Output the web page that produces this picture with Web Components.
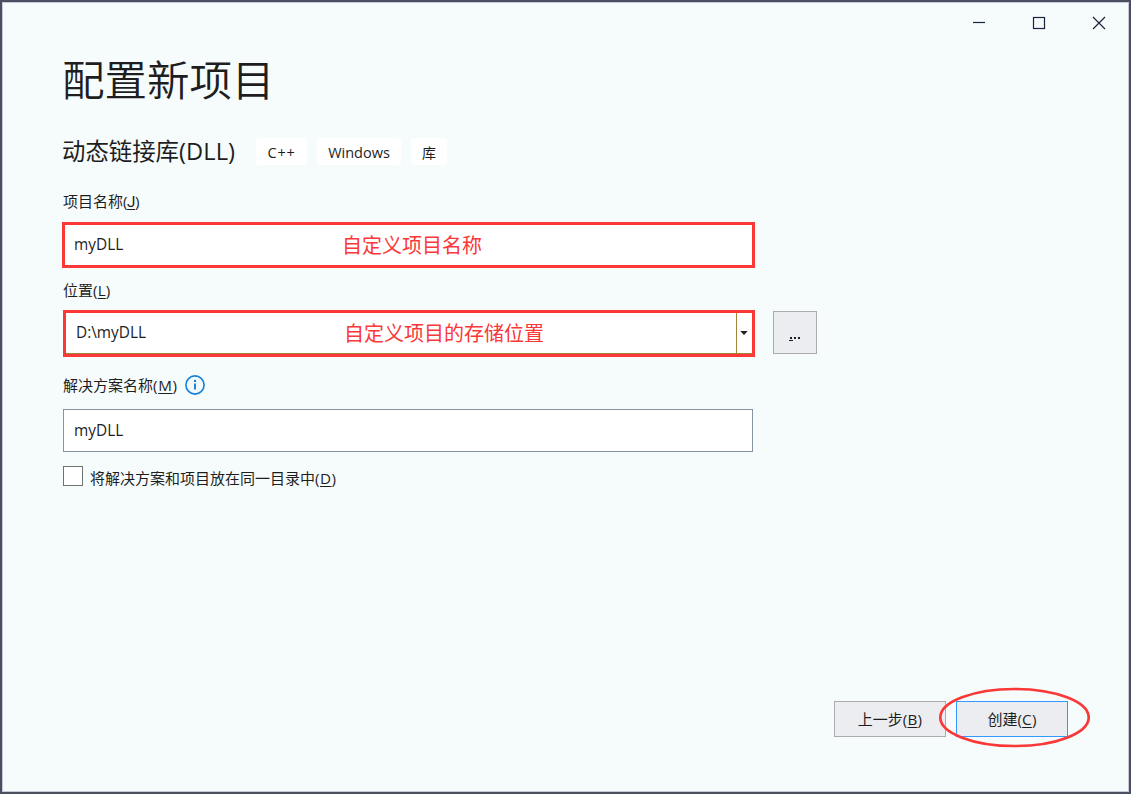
<!DOCTYPE html>
<html lang="zh-CN">
<head>
<meta charset="utf-8">
<title>配置新项目</title>
<style>
html,body{margin:0;height:100%;overflow:hidden}
body{font:15px/20px "Open Sans","Noto Sans CJK SC",sans-serif;color:#1e1e1e;background:#f6fcfc}
</style>
</head>
<body>
<project-window>
  <window-controls slot="controls"></window-controls>
  <h-title slot="content">配置新项目</h-title>
  <template-info slot="content" name="动态链接库" kind="(DLL)">
    <tag-chip style="--w:51px;--ls:.7px">C++</tag-chip>
    <tag-chip style="--w:84px">Windows</tag-chip>
    <tag-chip style="--w:36px;--fs:14px">库</tag-chip>
  </template-info>
  <field-label slot="content" key="J" style="--mt:26px;--kf:Roboto;--ks:-.4px">项目名称</field-label>
  <text-field slot="content" value="myDLL" style="--mt:12px">
    <red-note style="--x:-1px;--y:-1px;--w:693px;--h:46px;--tx:277px;--ty:10px">自定义项目名称</red-note>
  </text-field>
  <field-label slot="content" key="L" style="--mt:14px">位置</field-label>
  <location-row slot="content">
    <text-field value="D:\myDLL" combo style="--pad:12px">
      <red-note style="--x:0px;--y:-1px;--w:692px;--h:47px;--tx:278px;--ty:10px">自定义项目的存储位置</red-note>
    </text-field>
    <browse-button></browse-button>
  </location-row>
  <field-label slot="content" key="M" info style="--mt:21px;--ks:.7px">解决方案名称</field-label>
  <text-field slot="content" value="myDLL" style="--mt:14px"></text-field>
  <check-row slot="content" key="D" style="--ks:.5px">将解决方案和项目放在同一目录中</check-row>
  <push-button slot="actions" key="B">上一步</push-button>
  <push-button slot="actions" key="C" primary>创建</push-button>
</project-window>
<script>
function define(name, render) {
  customElements.define(name, class extends HTMLElement {
    connectedCallback() {
      if (this.shadowRoot) return;
      const t = document.createElement('template');
      t.innerHTML = render(this);
      this.attachShadow({ mode: 'open' }).append(t.content.cloneNode(true));
    }
  });
}
const keyCss = `.k{font-size:15.2px;letter-spacing:var(--ks,.2px);white-space:nowrap}.k u{font-family:var(--kf,inherit);text-decoration:underline;text-decoration-thickness:1px;text-underline-offset:2px;text-decoration-skip-ink:none}`;
const key = el => `<span class="k">(<u>${el.getAttribute('key')}</u>)</span>`;

define('project-window', () => `<style>
:host{display:flex;flex-direction:column;box-sizing:border-box;width:1131px;height:794px;border:2px solid #4c4f5f;background:#f6fcfc;box-shadow:inset 0 0 0 1px #c5c9da}
header{display:flex;justify-content:flex-end;height:42px}
main{flex:1;display:flex;flex-direction:column;align-items:flex-start;padding-left:61px}
footer{display:flex;justify-content:flex-end;gap:10px;padding:0 61px 55px 0}
</style><header><slot name="controls"></slot></header><main><slot name="content"></slot></main><footer><slot name="actions"></slot></footer>`);

define('window-controls', () => `<style>
:host{display:flex;height:42px}
span{display:grid;place-items:center;width:60px}
svg{display:block}
</style>
<span><svg width="14" height="14"><path d="M1 6.5h12" stroke="#17233b" stroke-width="1.2"/></svg></span>
<span><svg width="14" height="14"><rect x="1.5" y="1.5" width="11" height="11" fill="none" stroke="#17233b" stroke-width="1.2"/></svg></span>
<span><svg width="14" height="14"><path d="M1 1l12 12M13 1L1 13" stroke="#17233b" stroke-width="1.15"/></svg></span>`);

define('h-title', () => `<style>:host{display:block;font:350 42.5px/60px "Noto Sans CJK SC",sans-serif;margin-top:4px;margin-left:-1px;white-space:nowrap}</style><slot></slot>`);

define('template-info', el => `<style>
:host{display:flex;align-items:center;height:28px;margin-top:29px}
.n{width:194px;margin-left:-1px;font-size:23.4px;line-height:28px;white-space:nowrap}
.n span{font-size:23.6px;letter-spacing:.1px}
.t{display:flex;gap:10px}
</style><div class="n">${el.getAttribute('name')}<span>${el.getAttribute('kind')}</span></div><div class="t"><slot></slot></div>`);

define('tag-chip', () => `<style>:host{display:grid;place-items:center;box-sizing:border-box;width:var(--w);height:27px;padding-top:2px;border-radius:4px;background:#fff;font-size:var(--fs,14.5px);line-height:25px;letter-spacing:var(--ls,0)}</style><slot></slot>`);

define('field-label', el => `<style>
:host{display:flex;align-items:center;height:20px;margin-top:var(--mt);line-height:20px;white-space:nowrap}
:host([key="L"]){margin-bottom:-1px}
svg{margin-left:7px;flex:none}${keyCss}
</style><div><slot></slot>${key(el)}</div>${el.hasAttribute('info') ? `<svg width="20" height="20"><circle cx="10" cy="10" r="9.1" fill="#f3fafd" stroke="#1580d8" stroke-width="1.6"/><path d="M10 8.5v6" stroke="#1580d8" stroke-width="1.9"/><circle cx="10" cy="5.9" r="1.2" fill="#1580d8"/></svg>` : ''}`);

define('text-field', el => `<style>
:host{display:flex;position:relative;box-sizing:border-box;width:690px;height:43px;margin-top:var(--mt,0);border:1px solid #8593a3;background:#fff}
.v{flex:1;padding-left:var(--pad,10px);line-height:42px;font-size:15.4px}
.d{display:grid;place-items:center;width:14px;border-left:1px solid #a4823a;margin-right:1px}
:host([combo]){border-color:#a4823a}
</style><div class="v">${el.getAttribute('value')}</div>${el.hasAttribute('combo') ? `<div class="d"><svg width="8" height="4"><path d="M.3 0h7.4L4 4z" fill="#1e1e1e"/></svg></div>` : ''}<slot></slot>`);

define('red-note', () => `<style>
:host{position:absolute;box-sizing:border-box;left:calc(var(--x) - 1px);top:calc(var(--y) - 1px);width:var(--w);height:var(--h);border:3px solid #fa3838;color:#fa3838;font:20px/26px "Noto Sans CJK SC",sans-serif;padding:calc(var(--ty) - 3px) 0 0 var(--tx);white-space:nowrap}
</style><slot></slot>`);

define('location-row', () => `<style>:host{display:flex;gap:20px;margin-top:12px}</style><slot></slot>`);

define('browse-button', () => `<style>
:host{display:grid;place-items:center;box-sizing:border-box;width:44px;height:43px;border:1px solid #acacb0;background:#ecedf0}
svg{display:block;margin-top:14px}
</style><svg width="12" height="5"><path d="M1 0h2v2H1zM5 0h2v2H5zM9 0h2v2H9zM0 3h4v1H0z" fill="#1e1e1e"/></svg>`);

define('check-row', el => `<style>
:host{display:flex;align-items:center;height:20px;margin-top:14px;white-space:nowrap}
i{box-sizing:border-box;width:20px;height:20px;border:1px solid #717171;background:#fff;margin-right:7px}
div{margin-top:3px}${keyCss}
</style><i></i><div><slot></slot>${key(el)}</div>`);

define('push-button', el => `<style>
:host{position:relative;display:grid;place-items:center;box-sizing:border-box;width:112px;height:36px;border:1px solid #acacb0;background:#ecedf0;line-height:34px}
:host([primary]){border-color:#3399ff}
svg{position:absolute;left:-19px;top:-16px}${keyCss}
</style><div><slot></slot>${key(el)}</div>${el.hasAttribute('primary') ? `<svg width="152" height="62"><ellipse cx="76.5" cy="31.5" rx="74.2" ry="28.5" fill="none" stroke="#fa3838" stroke-width="2.7"/></svg>` : ''}`);
</script>
</body>
</html>
